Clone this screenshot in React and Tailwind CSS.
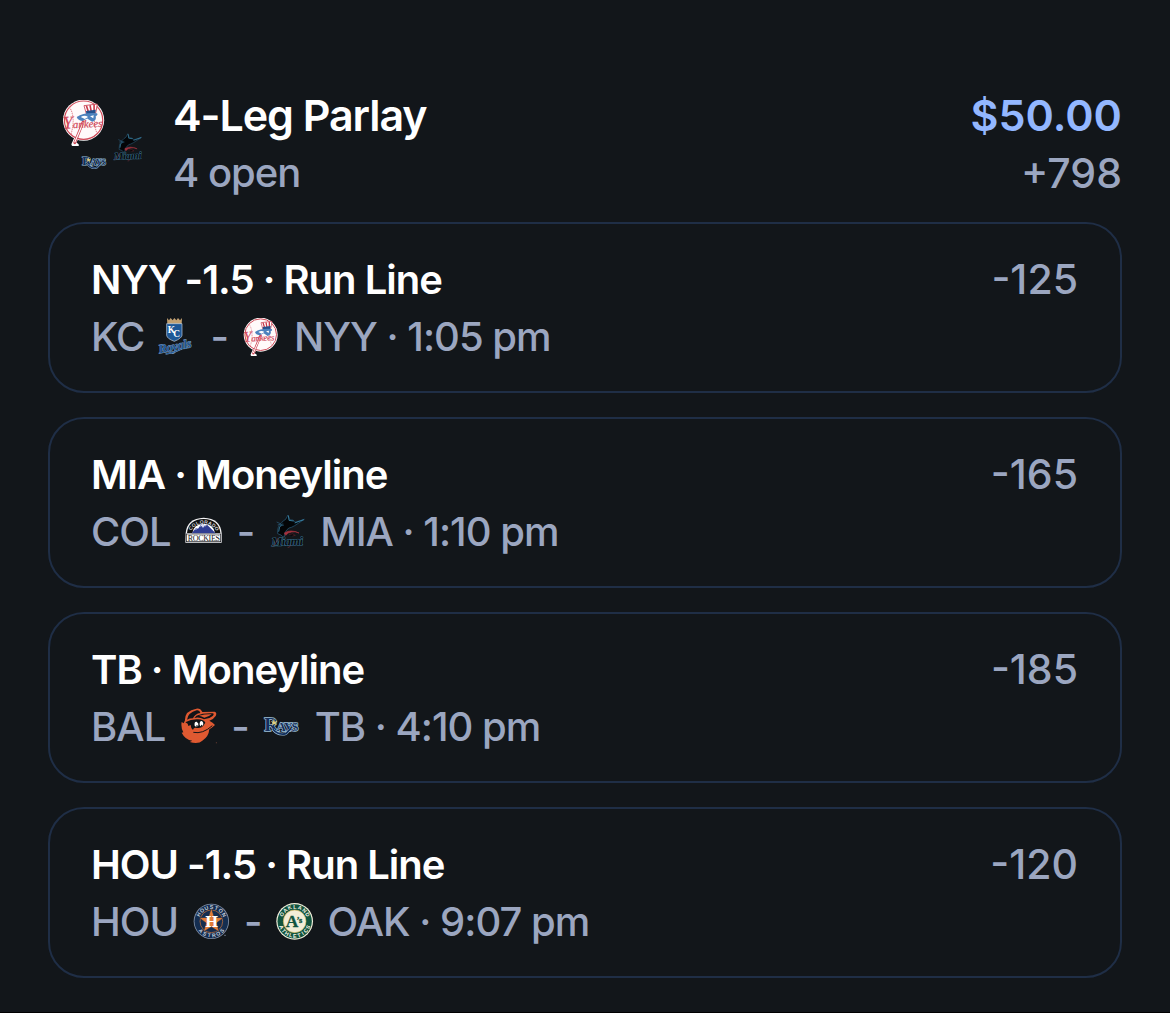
import React from "react";

function ArcLabel({ text, cx, cy, radius, spread, below, ...rest }) {
  const letters = [...text];
  const step = spread / (letters.length - 1);
  return (
    <g fontFamily="Liberation Sans, sans-serif" fontWeight="700" textAnchor="middle" {...rest}>
      {letters.map((letter, i) => {
        const angle = -spread / 2 + i * step;
        return (
          <text
            key={i}
            x={cx}
            y={below ? cy + radius : cy - radius}
            transform={`rotate(${below ? -angle : angle} ${cx} ${cy})`}
          >
            {letter}
          </text>
        );
      })}
    </g>
  );
}

function Yankees({ className }) {
  return (
    <svg className={className} viewBox="27 24 114 114" role="img" aria-label="Yankees">
      <path d="M66 116 L58 134 M61 133 L66 136" stroke="#fff" strokeWidth="10" strokeLinecap="round" />
      <circle cx="83" cy="74" r="51" fill="#fff" />
      <circle cx="83" cy="74" r="47.5" fill="#fffafa" stroke="#cf4a58" strokeWidth="3" />
      <path d="M48 42 Q64 66 52 108 M117 42 Q103 72 116 106" fill="none" stroke="#e0828c" strokeWidth="2.5" strokeDasharray="3 2" />
      <path d="M82 78 L61 130" stroke="#cf4a58" strokeWidth="7" strokeLinecap="round" />
      <path d="M82 80 L61 129" stroke="#fff" strokeWidth="3" />
      <path d="M84 38 L117 34 L113 56 L90 59 Z" fill="#fff" stroke="#c8384a" strokeWidth="2" />
      <path d="M90 38 L95 54 M99 37 L102 53 M109 36 L109 52" stroke="#c8384a" strokeWidth="4" />
      <path d="M89 51 L113 48 L112 57 L90 60 Z" fill="#24508c" />
      <path d="M66 66 Q84 54 116 57 Q120 61 113 64 Q116 74 104 78 L92 70 L80 76 Q68 74 66 66 Z" fill="#4d82bd" />
      <path d="M76 66 Q86 60 94 66 L86 71 Z M99 64 L108 62 L107 69 Z" fill="#fff" />
      <text x="32" y="93" fontSize="27" fontStyle="italic" fontFamily="Liberation Serif, serif" fill="#d0485a" stroke="#d0485a" strokeWidth="0.5" transform="rotate(-3 80 86)">
        <tspan fontSize="44">Y</tspan>ankees
      </text>
    </svg>
  );
}

function Royals({ className }) {
  return (
    <svg className={className} viewBox="30 24 114 114" role="img" aria-label="Royals">
      <path d="M57 24 L63 31 L68 24 L74 31 L79 24 L85 31 L90 24 L96 31 L102 24 L101 42 H58 Z" fill="#c2a071" />
      <path d="M56 41 H102 V76 Q101 85 79 94 Q57 86 56 76 Z" fill="#1e5796" stroke="#c4d2e2" strokeWidth="2" />
      <text x="59" y="69" fontSize="28" fontWeight="700" fontFamily="Liberation Serif, serif" fill="#fff">
        K<tspan dx="-4" dy="13">C</tspan>
      </text>
      <g transform="rotate(-11 82 112)">
        <text x="31" y="121" fontSize="38" fontStyle="italic" fontWeight="700" fontFamily="Liberation Serif, serif" fill="#1e5796" stroke="#7f9dbc" strokeWidth="2.5" paintOrder="stroke">Royals</text>
      </g>
      <path d="M53 132 Q80 128 101 116" fill="none" stroke="#7f9dbc" strokeWidth="5" />
      <path d="M53 132 Q80 128 101 116" fill="none" stroke="#1e5796" strokeWidth="3" />
    </svg>
  );
}

function Rockies({ className }) {
  return (
    <svg className={className} viewBox="24 24 114 114" role="img" aria-label="Rockies">
      <path d="M26 85 Q29 40 80 38 Q131 40 134 85 V113 H25 Z" fill="#f4f4f6" />
      <path d="M30 84 Q34 44 80 42 Q126 44 130 84 Z" fill="#111" />
      <path d="M46 84 Q50 57 80 56 Q110 57 114 84 Z" fill="#fff" />
      <path d="M44 85 L57 69 L63 71 L75 55 L84 62 L91 60 L116 85 Z" fill="#303d93" />
      <path d="M75 55 L69 66 L74 63 L78 69 L82 63 L86 66 L83 61 Z M57 69 L54 74 L60 73 Z" fill="#d9dcf3" />
      <ArcLabel text="COLORADO" cx={80} cy={100} radius={44} spread={106} fontSize="15" fill="#d5d5da" />
      <rect x="28" y="87" width="103" height="23" fill="#fff" stroke="#17171b" strokeWidth="2" />
      <text x="80" y="107" textAnchor="middle" fontSize="24" fontFamily="Liberation Serif, serif" fill="#17171b">ROCKIES</text>
    </svg>
  );
}

function Marlins({ className }) {
  return (
    <svg className={className} viewBox="21 24 114 114" role="img" aria-label="Marlins">
      <path d="M50 86 Q48 66 60 55 Q67 46 74 43 L81 30 L86 44 Q99 43 102 52 L130 43 L101 62 Q91 68 84 69 Q70 78 69 98 Q60 88 50 86 Z" fill="#030507" stroke="#2c5f80" strokeWidth="2" />
      <path d="M53 80 Q52 65 65 56 M82 32 L84 46 L98 48 M101 54 L128 44" fill="none" stroke="#3c89ac" strokeWidth="2.5" />
      <path d="M47 51 L60 57 L50 60 M57 63 L69 60" fill="none" stroke="#2c5f80" strokeWidth="2" />
      <path d="M70 84 Q88 72 114 84 Q104 78 92 81 Q80 82 74 91 Z" fill="#a5323e" stroke="#a5323e" strokeWidth="2" />
      <path d="M84 89 Q96 83 103 91 L94 93" fill="#050709" stroke="#742832" strokeWidth="1.5" />
      <g transform="rotate(-2 80 110)">
        <text x="32" y="121" fontSize="36" fontStyle="italic" fontWeight="700" fontFamily="Liberation Serif, serif" fill="#07090c" stroke="#39718f" strokeWidth="3" paintOrder="stroke">Miami</text>
      </g>
      <path d="M35 124 Q45 118 51 99 M89 120 Q85 130 80 127" fill="none" stroke="#8c3846" strokeWidth="1.5" />
    </svg>
  );
}

function Orioles({ className }) {
  return (
    <svg className={className} viewBox="30 24 114 114" role="img" aria-label="Orioles">
      <path d="M48 61 Q47 32 82 26 Q94 24 100 36 L137 35 Q145 38 140 48 Q134 58 121 62 Q132 67 138 75 Q128 84 121 88 Q119 111 100 122 Q89 133 62 126 L70 122 Q49 120 38 98 L43 97 Q35 83 38 66 L44 70 Z" fill="#df5931" />
      <path d="M54 59 Q57 38 83 31 Q92 29 94 39 Q78 41 72 55 Q61 55 54 59 Z" fill="#111418" />
      <path d="M82 47 Q102 39 131 40 Q137 41 131 48 Q121 57 105 58 Q91 50 76 54 Z" fill="#111418" />
      <path d="M90 47 Q110 42 128 43 Q119 51 106 53 Q98 48 90 47 Z" fill="#df5931" />
      <path d="M49 67 Q66 57 87 58 Q105 59 109 68 L103 77 Q95 87 80 83 Q74 82 72 90 Q65 84 65 75 L58 78 L56 71 Z" fill="#111418" />
      <path d="M77 77 Q75 64 83 65 Q90 69 88 77 Q82 83 77 77 Z M92 75 Q91 63 98 63 Q105 67 102 76 Q96 82 92 75 Z" fill="#fff" />
      <ellipse cx="84" cy="78" rx="2" ry="3" fill="#111418" />
      <ellipse cx="98" cy="77" rx="2" ry="3" fill="#111418" />
      <path d="M73 97 Q101 103 130 77" fill="none" stroke="#111418" strokeWidth="3" />
      <circle cx="142" cy="128" r="1.5" fill="#8b4c3b" />
    </svg>
  );
}

function Rays({ className }) {
  return (
    <svg className={className} viewBox="30 24 114 114" role="img" aria-label="Rays">
      <text x="34" y="92" fontSize="38" fontFamily="Liberation Serif, serif" fontWeight="700" fill="#132f5d" stroke="#9fc2dc" strokeWidth="4" paintOrder="stroke">
        <tspan fontSize="58">R</tspan><tspan dx="-4">A</tspan><tspan dx="-5">Y</tspan><tspan dx="-3">S</tspan>
      </text>
      <path d="M60 88 Q75 107 99 101 L111 89" fill="none" stroke="#9fc2dc" strokeWidth="8" />
      <path d="M60 88 Q75 107 99 101 L112 87" fill="none" stroke="#132f5d" strokeWidth="5" />
      <path d="M63 55 L65 65 L74 62 L68 69 L71 76 L63 72 L57 78 L59 69 L53 63 L60 65 Z" fill="#e2cf7c" />
    </svg>
  );
}

function Astros({ className }) {
  return (
    <svg className={className} viewBox="27 24 114 114" role="img" aria-label="Astros">
      <circle cx="85" cy="79" r="53" fill="#8390a6" />
      <circle cx="85" cy="79" r="50.5" fill="#142d50" />
      <circle cx="85" cy="79" r="34" fill="#142d50" stroke="#d8793a" strokeWidth="2" />
      <path d="M85 38 L94 67 L122 68 L101 84 L109 111 L85 96 L61 111 L69 84 L48 68 L76 67 Z" fill="#e17b36" stroke="#142d50" strokeWidth="2" />
      <text x="85" y="95" textAnchor="middle" fontSize="42" fontWeight="700" fontFamily="DejaVu Serif, serif" fill="#fff">H</text>
      <ArcLabel text="HOUSTON" cx={85} cy={79} radius={37} spread={124} fontSize="16" fill="#c3ccd8" />
      <ArcLabel text="ASTROS" cx={85} cy={79} radius={48} spread={96} below fontSize="16" fill="#c3ccd8" />
      <path d="M123 121 h6" stroke="#8390a6" strokeWidth="2" />
    </svg>
  );
}

function Athletics({ className }) {
  return (
    <svg className={className} viewBox="30 24 114 114" role="img" aria-label="Athletics">
      <circle cx="86" cy="79" r="55" fill="#f3f0dc" />
      <circle cx="86" cy="79" r="51.5" fill="#12543f" />
      <circle cx="86" cy="79" r="34" fill="#f2edd8" stroke="#d7b65b" strokeWidth="2" />
      <text x="59" y="97" fontSize="52" fontWeight="700" fontFamily="Liberation Serif, serif" fill="#12543f" stroke="#12543f" strokeWidth="1">
        A<tspan dx="-3" dy="-14" fontSize="25">’s</tspan>
      </text>
      <ArcLabel text="OAKLAND" cx={86} cy={79} radius={38} spread={124} fontSize="16" fill="#f5f3e4" />
      <ArcLabel text="ATHLETICS" cx={86} cy={79} radius={49} spread={132} below fontSize="16" fill="#f5f3e4" />
    </svg>
  );
}

const legs = [
  { pick: "NYY -1.5 · Run Line", odds: "-125", away: "KC", AwayLogo: Royals, home: "NYY", HomeLogo: Yankees, time: "1:05 pm" },
  { pick: "MIA · Moneyline", odds: "-165", away: "COL", AwayLogo: Rockies, home: "MIA", HomeLogo: Marlins, time: "1:10 pm" },
  { pick: "TB · Moneyline", odds: "-185", away: "BAL", AwayLogo: Orioles, home: "TB", HomeLogo: Rays, time: "4:10 pm" },
  { pick: "HOU -1.5 · Run Line", odds: "-120", away: "HOU", AwayLogo: Astros, home: "OAK", HomeLogo: Athletics, time: "9:07 pm" },
];

function Leg({ pick, odds, away, AwayLogo, home, HomeLogo, time }) {
  return (
    <li className="flex items-start justify-between rounded-[36px] border-2 border-[#1f2e46] pt-[27px] pr-[42px] pb-[26px] pl-[41px]">
      <div>
        <h2 className="text-[40px] leading-[57px] font-semibold tracking-tight text-white">{pick}</h2>
        <p className="flex items-center gap-3.5 text-[40px] leading-[57px] font-[450] tracking-tight">
          <span>{away}</span>
          <AwayLogo className="size-[38px]" />
          <span>-</span>
          <HomeLogo className="size-[38px]" />
          <span>{home} · {time}</span>
        </p>
      </div>
      <p className="text-[41px] leading-[57px] font-[450]">{odds}</p>
    </li>
  );
}

export default function App() {
  return (
    <main className="min-h-screen border-b border-black bg-[#12161a] px-12 pt-[86px] pb-[34px] font-['Inter',sans-serif] text-[#9ba6c0]">
      <header className="flex items-start pb-[20px] pl-[13px]">
        <div className="flex gap-1 pt-[14px]">
          <div className="flex flex-col items-end gap-1">
            <Yankees className="size-[46px]" />
            <Rays className="size-[26px]" />
          </div>
          <Marlins className="mt-[32px] size-8" />
        </div>
        <div className="ml-[30px] flex grow justify-between">
          <div>
            <h1 className="text-[43px] leading-[58px] font-semibold tracking-tight text-white">4-Leg Parlay</h1>
            <p className="text-[40px] leading-[58px] font-[450] tracking-tight">4 open</p>
          </div>
          <div className="text-right">
            <p className="text-[43px] leading-[58px] font-semibold text-[#93b7ff]">$50.00</p>
            <p className="text-[41px] leading-[58px] font-[450]">+798</p>
          </div>
        </div>
      </header>
      <ul className="flex flex-col gap-6">
        {legs.map((leg) => (
          <Leg key={leg.pick} {...leg} />
        ))}
      </ul>
    </main>
  );
}
